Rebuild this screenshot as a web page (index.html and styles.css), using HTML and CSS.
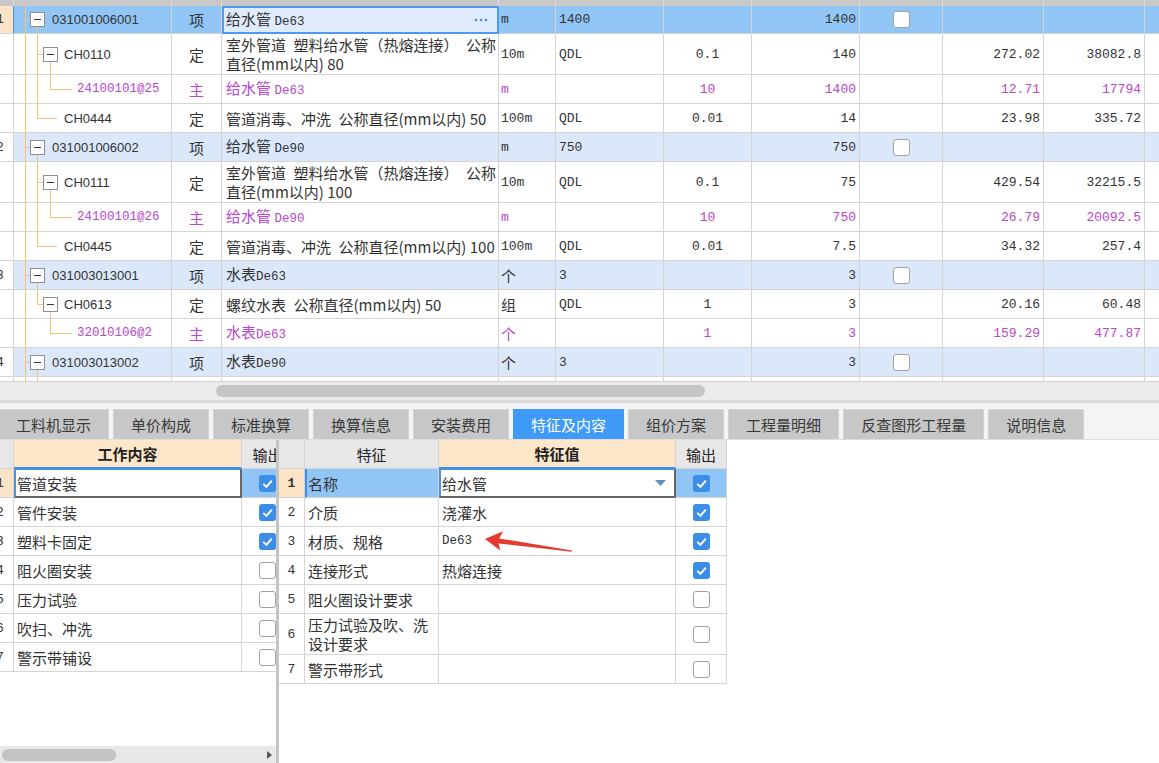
FILE: index.html
```html
<!DOCTYPE html>
<html lang="zh-CN">
<head>
<meta charset="utf-8">
<title>特征及内容</title>
<link rel="stylesheet" href="styles.css">
</head>
<body>
<div class="app">
  <div class="top">
    <div class="grid">
      <div class="row head"><div class="c"></div><div class="c"></div><div class="c"></div><div class="c"></div><div class="c"></div><div class="c"></div><div class="c"></div><div class="c"></div><div class="c"></div><div class="c"></div><div class="c"></div><div class="c"></div></div>

      <div class="row r28 sel">
        <div class="c n">1</div>
        <div class="c code tr-g"><span class="bx l0"></span><span class="cd">031001006001</span></div>
        <div class="c t">项</div>
        <div class="c nm edit"><span>给水管 <span class="mono">De63</span></span><svg class="dots" width="14" height="4" viewBox="0 0 14 4"><circle cx="2" cy="2" r="1.3" fill="#3d8fe8"/><circle cx="7" cy="2" r="1.3" fill="#3d8fe8"/><circle cx="12" cy="2" r="1.3" fill="#3d8fe8"/></svg></div>
        <div class="c u">m</div>
        <div class="c ex">1400</div>
        <div class="c k"></div>
        <div class="c q">1400</div>
        <div class="c cb"><span class="chk"></span></div>
        <div class="c p"></div>
        <div class="c p"></div>
        <div class="c"></div>
      </div>

      <div class="row tall">
        <div class="c n"></div>
        <div class="c code tr-b"><span class="bx l1"></span><span class="cd1">CH0110</span></div>
        <div class="c t">定</div>
        <div class="c nm"><span>室外管道&ensp;塑料给水管（热熔连接）&ensp;公称<br>直径(mm以内) 80</span></div>
        <div class="c u">10m</div>
        <div class="c ex">QDL</div>
        <div class="c k">0.1</div>
        <div class="c q">140</div>
        <div class="c cb"></div>
        <div class="c p">272.02</div>
        <div class="c p">38082.8</div>
        <div class="c"></div>
      </div>

      <div class="row zhu">
        <div class="c n"></div>
        <div class="c code tr-m"><span class="lm">24100101@25</span></div>
        <div class="c t">主</div>
        <div class="c nm"><span>给水管 <span class="mono">De63</span></span></div>
        <div class="c u">m</div>
        <div class="c ex"></div>
        <div class="c k">10</div>
        <div class="c q">1400</div>
        <div class="c cb"></div>
        <div class="c p">12.71</div>
        <div class="c p">17794</div>
        <div class="c"></div>
      </div>

      <div class="row">
        <div class="c n"></div>
        <div class="c code tr-ll"><span class="lf">CH0444</span></div>
        <div class="c t">定</div>
        <div class="c nm"><span>管道消毒、冲洗&ensp;公称直径(mm以内) 50</span></div>
        <div class="c u">100m</div>
        <div class="c ex">QDL</div>
        <div class="c k">0.01</div>
        <div class="c q">14</div>
        <div class="c cb"></div>
        <div class="c p">23.98</div>
        <div class="c p">335.72</div>
        <div class="c"></div>
      </div>

      <div class="row xiang">
        <div class="c n">2</div>
        <div class="c code tr-g"><span class="bx l0"></span><span class="cd">031001006002</span></div>
        <div class="c t">项</div>
        <div class="c nm"><span>给水管 <span class="mono">De90</span></span></div>
        <div class="c u">m</div>
        <div class="c ex">750</div>
        <div class="c k"></div>
        <div class="c q">750</div>
        <div class="c cb"><span class="chk"></span></div>
        <div class="c p"></div>
        <div class="c p"></div>
        <div class="c"></div>
      </div>

      <div class="row tall">
        <div class="c n"></div>
        <div class="c code tr-b"><span class="bx l1"></span><span class="cd1">CH0111</span></div>
        <div class="c t">定</div>
        <div class="c nm"><span>室外管道&ensp;塑料给水管（热熔连接）&ensp;公称<br>直径(mm以内) 100</span></div>
        <div class="c u">10m</div>
        <div class="c ex">QDL</div>
        <div class="c k">0.1</div>
        <div class="c q">75</div>
        <div class="c cb"></div>
        <div class="c p">429.54</div>
        <div class="c p">32215.5</div>
        <div class="c"></div>
      </div>

      <div class="row zhu">
        <div class="c n"></div>
        <div class="c code tr-m"><span class="lm">24100101@26</span></div>
        <div class="c t">主</div>
        <div class="c nm"><span>给水管 <span class="mono">De90</span></span></div>
        <div class="c u">m</div>
        <div class="c ex"></div>
        <div class="c k">10</div>
        <div class="c q">750</div>
        <div class="c cb"></div>
        <div class="c p">26.79</div>
        <div class="c p">20092.5</div>
        <div class="c"></div>
      </div>

      <div class="row">
        <div class="c n"></div>
        <div class="c code tr-ll"><span class="lf">CH0445</span></div>
        <div class="c t">定</div>
        <div class="c nm"><span>管道消毒、冲洗&ensp;公称直径(mm以内) 100</span></div>
        <div class="c u">100m</div>
        <div class="c ex">QDL</div>
        <div class="c k">0.01</div>
        <div class="c q">7.5</div>
        <div class="c cb"></div>
        <div class="c p">34.32</div>
        <div class="c p">257.4</div>
        <div class="c"></div>
      </div>

      <div class="row xiang">
        <div class="c n">3</div>
        <div class="c code tr-g"><span class="bx l0"></span><span class="cd">031003013001</span></div>
        <div class="c t">项</div>
        <div class="c nm"><span>水表<span class="mono">De63</span></span></div>
        <div class="c u"><span class="cj">个</span></div>
        <div class="c ex">3</div>
        <div class="c k"></div>
        <div class="c q">3</div>
        <div class="c cb"><span class="chk"></span></div>
        <div class="c p"></div>
        <div class="c p"></div>
        <div class="c"></div>
      </div>

      <div class="row">
        <div class="c n"></div>
        <div class="c code tr-bl"><span class="bx l1"></span><span class="cd1">CH0613</span></div>
        <div class="c t">定</div>
        <div class="c nm"><span>螺纹水表&ensp;公称直径(mm以内) 50</span></div>
        <div class="c u"><span class="cj">组</span></div>
        <div class="c ex">QDL</div>
        <div class="c k">1</div>
        <div class="c q">3</div>
        <div class="c cb"></div>
        <div class="c p">20.16</div>
        <div class="c p">60.48</div>
        <div class="c"></div>
      </div>

      <div class="row zhu">
        <div class="c n"></div>
        <div class="c code tr-ml"><span class="lm">32010106@2</span></div>
        <div class="c t">主</div>
        <div class="c nm"><span>水表<span class="mono">De63</span></span></div>
        <div class="c u"><span class="cj">个</span></div>
        <div class="c ex"></div>
        <div class="c k">1</div>
        <div class="c q">3</div>
        <div class="c cb"></div>
        <div class="c p">159.29</div>
        <div class="c p">477.87</div>
        <div class="c"></div>
      </div>

      <div class="row xiang">
        <div class="c n">4</div>
        <div class="c code tr-g"><span class="bx l0"></span><span class="cd">031003013002</span></div>
        <div class="c t">项</div>
        <div class="c nm"><span>水表<span class="mono">De90</span></span></div>
        <div class="c u"><span class="cj">个</span></div>
        <div class="c ex">3</div>
        <div class="c k"></div>
        <div class="c q">3</div>
        <div class="c cb"><span class="chk"></span></div>
        <div class="c p"></div>
        <div class="c p"></div>
        <div class="c"></div>
      </div>

      <div class="row part">
        <div class="c n"></div><div class="c code tr-v"></div><div class="c"></div><div class="c"></div><div class="c"></div><div class="c"></div><div class="c"></div><div class="c"></div><div class="c"></div><div class="c"></div><div class="c"></div><div class="c"></div>
      </div>
    </div>
    <div class="hs"><div class="hthumb"></div></div>
  </div>

  <div class="sep"></div>

  <div class="tabs">
    <div class="tab">工料机显示</div>
    <div class="tab">单价构成</div>
    <div class="tab">标准换算</div>
    <div class="tab">换算信息</div>
    <div class="tab">安装费用</div>
    <div class="tab on">特征及内容</div>
    <div class="tab">组价方案</div>
    <div class="tab">工程量明细</div>
    <div class="tab">反查图形工程量</div>
    <div class="tab">说明信息</div>
  </div>

  <div class="bottom">
    <div class="left">
      <div class="ltable">
        <div class="lrow hd"><div class="tc"></div><div class="tc pe">工作内容</div><div class="tc">输出</div></div>
        <div class="lrow lsel"><div class="tc ln">1</div><div class="tc edit2">管道安装</div><div class="tc lo"><svg class="ck" width="17" height="17" viewBox="0 0 17 17"><rect width="17" height="17" rx="3" fill="#3b8de8"/><path d="M4.3 8.9 L7.4 11.9 L12.8 5.6" fill="none" stroke="#fff" stroke-width="2"/></svg></div></div>
        <div class="lrow"><div class="tc ln">2</div><div class="tc lt">管件安装</div><div class="tc lo"><svg class="ck" width="17" height="17" viewBox="0 0 17 17"><rect width="17" height="17" rx="3" fill="#3b8de8"/><path d="M4.3 8.9 L7.4 11.9 L12.8 5.6" fill="none" stroke="#fff" stroke-width="2"/></svg></div></div>
        <div class="lrow"><div class="tc ln">3</div><div class="tc lt">塑料卡固定</div><div class="tc lo"><svg class="ck" width="17" height="17" viewBox="0 0 17 17"><rect width="17" height="17" rx="3" fill="#3b8de8"/><path d="M4.3 8.9 L7.4 11.9 L12.8 5.6" fill="none" stroke="#fff" stroke-width="2"/></svg></div></div>
        <div class="lrow"><div class="tc ln">4</div><div class="tc lt">阻火圈安装</div><div class="tc lo"><span class="chk"></span></div></div>
        <div class="lrow"><div class="tc ln">5</div><div class="tc lt">压力试验</div><div class="tc lo"><span class="chk"></span></div></div>
        <div class="lrow"><div class="tc ln">6</div><div class="tc lt">吹扫、冲洗</div><div class="tc lo"><span class="chk"></span></div></div>
        <div class="lrow"><div class="tc ln">7</div><div class="tc lt">警示带铺设</div><div class="tc lo"><span class="chk"></span></div></div>
      </div>
      <div class="lfill"></div>
      <div class="lscroll"><div class="lthumb"></div><div class="larrow"></div></div>
    </div>
    <div class="divider"></div>
    <div class="right">
      <div class="rrow hd"><div class="tc"></div><div class="tc">特征</div><div class="tc pe">特征值</div><div class="tc">输出</div></div>
      <div class="rrow rsel"><div class="tc rn">1</div><div class="tc fn">名称</div><div class="tc edit3"><span>给水管</span><svg class="dd" width="11" height="6" viewBox="0 0 11 6"><path d="M0 0 H11 L5.5 6 Z" fill="#5f8fbe"/></svg></div><div class="tc ro"><svg class="ck" width="17" height="17" viewBox="0 0 17 17"><rect width="17" height="17" rx="3" fill="#3b8de8"/><path d="M4.3 8.9 L7.4 11.9 L12.8 5.6" fill="none" stroke="#fff" stroke-width="2"/></svg></div></div>
      <div class="rrow"><div class="tc rn">2</div><div class="tc fn">介质</div><div class="tc fv">浇灌水</div><div class="tc ro"><svg class="ck" width="17" height="17" viewBox="0 0 17 17"><rect width="17" height="17" rx="3" fill="#3b8de8"/><path d="M4.3 8.9 L7.4 11.9 L12.8 5.6" fill="none" stroke="#fff" stroke-width="2"/></svg></div></div>
      <div class="rrow"><div class="tc rn">3</div><div class="tc fn">材质、规格</div><div class="tc fv"><span class="mono">De63</span></div><div class="tc ro"><svg class="ck" width="17" height="17" viewBox="0 0 17 17"><rect width="17" height="17" rx="3" fill="#3b8de8"/><path d="M4.3 8.9 L7.4 11.9 L12.8 5.6" fill="none" stroke="#fff" stroke-width="2"/></svg></div></div>
      <div class="rrow"><div class="tc rn">4</div><div class="tc fn">连接形式</div><div class="tc fv">热熔连接</div><div class="tc ro"><svg class="ck" width="17" height="17" viewBox="0 0 17 17"><rect width="17" height="17" rx="3" fill="#3b8de8"/><path d="M4.3 8.9 L7.4 11.9 L12.8 5.6" fill="none" stroke="#fff" stroke-width="2"/></svg></div></div>
      <div class="rrow"><div class="tc rn">5</div><div class="tc fn">阻火圈设计要求</div><div class="tc fv"></div><div class="tc ro"><span class="chk"></span></div></div>
      <div class="rrow tall"><div class="tc rn">6</div><div class="tc fn"><span>压力试验及吹、洗<br>设计要求</span></div><div class="tc fv"></div><div class="tc ro"><span class="chk"></span></div></div>
      <div class="rrow"><div class="tc rn">7</div><div class="tc fn">警示带形式</div><div class="tc fv"></div><div class="tc ro"><span class="chk"></span></div></div>
    </div>
  </div>
</div>

<svg class="annot" width="1159" height="763" viewBox="0 0 1159 763">
  <polygon points="485,539 503,531.3 499.2,538.4 572,550.4 571.7,551.7 498.6,543.4 500.3,550.6" fill="#e53a2f"/>
</svg>
</body>
</html>
```

FILE: styles.css
```css
* { box-sizing: border-box; }
html, body { margin: 0; padding: 0; }
body {
  width: 1159px;
  height: 763px;
  overflow: hidden;
  background: #fff;
  position: relative;
  font-family: "Noto Sans CJK SC", "Noto Sans", sans-serif;
  font-size: 15px;
  color: #333;
}
.app { display: flex; flex-direction: column; height: 763px; }

/* ---------- top grid ---------- */
.top { height: 400px; flex: none; display: flex; flex-direction: column; overflow: hidden; }
.grid { margin-left: -13px; flex: none; }
.row {
  display: grid;
  grid-template-columns: 27px 158px 50px 277px 57px 108px 88px 108px 83px 101px 101px 30px;
  height: 29px;
}
.row.r28 { height: 28px; }
.row.tall { height: 41px; }
.row.head { height: 6px; background: #c8c8c8; }
.row.part { height: 5px; }
.c {
  border-right: 1px solid #d4d4d4;
  border-bottom: 1px solid #d4d4d4;
  display: flex;
  align-items: center;
  overflow: hidden;
  white-space: nowrap;
  padding: 0 3px;
  line-height: 19px;
}
.head .c { border-bottom: none; border-right-color: #dadada; }
.xiang { background: #dbe8fa; }
.sel { background: #91c5f5; }
.zhu { color: #b847c9; }

.mono { font-family: "Liberation Mono", monospace; font-size: 12.5px; }
.n { justify-content: center; background: #fff; padding: 0; font-family: "Liberation Mono", monospace; font-size: 13px; }
.sel .n { background: #fde3c5; border-right-color: #4a8fe0; }
.code { padding: 0; font-family: "Liberation Sans", sans-serif; font-size: 13px; background-repeat: no-repeat; --L: linear-gradient(#f5c27c, #f5c27c); }
.t { justify-content: center; padding: 0; }
.nm { padding-left: 4px; }
.edit { border: 2px solid #4c9bf0; background: #dfeafb; padding-left: 2px; }
.dots { margin-left: auto; margin-right: 6px; flex: none; }
.u { padding-left: 2px; font-family: "Liberation Mono", monospace; font-size: 13px; }
.cj { font-family: "Noto Sans CJK SC", sans-serif; font-size: 15px; }
.ex { padding-left: 3px; font-family: "Liberation Mono", monospace; font-size: 13px; }
.k { justify-content: center; font-family: "Liberation Mono", monospace; font-size: 13px; }
.q, .p { justify-content: flex-end; padding-right: 3px; font-family: "Liberation Mono", monospace; font-size: 13px; }
.cb { justify-content: center; }

.chk {
  display: block;
  width: 17px;
  height: 17px;
  flex: none;
  border: 1px solid #a2a2a2;
  border-radius: 3px;
  background: #fff;
}
.ck { display: block; flex: none; }

/* tree boxes and text */
.bx {
  width: 15px;
  height: 15px;
  flex: none;
  border: 1px solid #8e8e8e;
  background: #fff;
  display: flex;
  align-items: center;
  justify-content: center;
}
.bx::after { content: ""; width: 7px; height: 1px; background: #333; }
.bx.l0 { margin-left: 16px; }
.bx.l1 { margin-left: 29px; }
.cd { margin-left: 7px; }
.cd1 { margin-left: 6px; }
.lf { margin-left: 50px; }
.lm { margin-left: 63px; font-family: "Liberation Mono", monospace; font-size: 12.5px; }

/* tree connector lines (orange) */
.tr-g {
  background-image: var(--L), var(--L), var(--L);
  background-size: 1px 100%, 5px 1px, 1px 50%;
  background-position: 11px 0, 11px 50%, 23px 100%;
}
.tr-b {
  background-image: var(--L), var(--L), var(--L), var(--L);
  background-size: 1px 100%, 1px 100%, 6px 1px, 1px 50%;
  background-position: 11px 0, 23px 0, 23px 50%, 36px 100%;
}
.tr-bl {
  background-image: var(--L), var(--L), var(--L), var(--L);
  background-size: 1px 100%, 1px 50%, 6px 1px, 1px 50%;
  background-position: 11px 0, 23px 0, 23px 50%, 36px 100%;
}
.tr-m {
  background-image: var(--L), var(--L), var(--L), var(--L);
  background-size: 1px 100%, 1px 100%, 1px 50%, 22px 1px;
  background-position: 11px 0, 23px 0, 36px 0, 36px 50%;
}
.tr-ml {
  background-image: var(--L), var(--L), var(--L);
  background-size: 1px 100%, 1px 50%, 22px 1px;
  background-position: 11px 0, 36px 0, 36px 50%;
}
.tr-ll {
  background-image: var(--L), var(--L), var(--L);
  background-size: 1px 100%, 1px 50%, 20px 1px;
  background-position: 11px 0, 23px 0, 23px 50%;
}
.tr-v {
  background-image: var(--L), var(--L);
  background-size: 1px 100%, 1px 100%;
  background-position: 11px 0, 23px 0;
}

.hs { height: 18px; flex: none; margin-top: auto; background: #ececec; display: flex; align-items: center; }
.hthumb { margin-left: 216px; width: 489px; height: 12px; border-radius: 6px; background: #c6c6c6; }

/* ---------- tabs ---------- */
.sep { height: 3px; flex: none; background: #d9d9d9; }
.tabs {
  height: 37px;
  flex: none;
  background: #f4f4f4;
  border-bottom: 1px solid #dedede;
  display: flex;
  align-items: flex-start;
  gap: 4px;
  padding-top: 6px;
}
.tab {
  height: 30px;
  padding: 0 17px;
  background: #c7c7c7;
  color: #3a3a3a;
  border: 1px solid #d3d3d3;
  border-bottom: none;
  display: flex;
  align-items: center;
  white-space: nowrap;
  font-size: 15px;
}
.tab:first-child { margin-left: -2px; }
.tab.on { background: #3f9bf7; border-color: #3f9bf7; color: #fff; }

/* ---------- bottom panels ---------- */
.bottom { flex: 1; min-height: 0; display: flex; }
.left { width: 276px; flex: none; display: flex; flex-direction: column; overflow: hidden; }
.divider { width: 3px; flex: none; background: #c4c4c4; }
.right { flex: 1; overflow: hidden; }

.ltable { margin-left: -13px; }
.lrow { display: grid; grid-template-columns: 27px 228px 52px; height: 29px; }
.rrow { display: grid; grid-template-columns: 26px 134px 237px 51px; height: 29px; width: 448px; }
.rrow.tall { height: 41px; }

.tc {
  border-right: 1px solid #d4d4d4;
  border-bottom: 1px solid #d4d4d4;
  display: flex;
  align-items: center;
  padding: 0 3px;
  white-space: nowrap;
  overflow: hidden;
  line-height: 19px;
}
.hd .tc { background: #e7e7e7; justify-content: center; color: #222; padding: 0; }
.hd .tc.pe { background: #fde6c9; font-weight: bold; border-bottom: 2px solid #3d8fe8; }

.ln { justify-content: center; padding: 0; font-family: "Liberation Mono", monospace; font-size: 13px; }
.lt { padding-left: 3px; }
.lo { justify-content: center; padding: 0; }
.lsel .ln { background: #fde3c5; }
.lsel .lo { background: #91c5f5; }
.edit2, .edit3 {
  background: #fff;
  border-top: 1px solid #4d94e0;
  border-left: 2px solid #4d94e0;
  border-right: 2px solid #666;
  border-bottom: 2px solid #666;
  padding-left: 1px;
}
.dd { margin-left: auto; margin-right: 5px; flex: none; }

.rn { justify-content: center; padding: 0; font-family: "Liberation Mono", monospace; font-size: 13px; }
.fn { padding-left: 3px; }
.fv { padding-left: 3px; }
.ro { justify-content: center; padding: 0; }
.rsel .rn { background: #fde3c5; font-weight: bold; }
.rsel .fn { background: #91c5f5; border-left: 2px solid #3d8fe8; padding-left: 1px; }
.rsel .ro { background: #91c5f5; }

.lfill { flex: 1; }
.lscroll { height: 17px; flex: none; background: #e8e8e8; display: flex; align-items: center; padding: 0 4px 0 2px; }
.lthumb { width: 114px; height: 12px; border-radius: 6px; background: #c3c3c3; }
.larrow { margin-left: auto; width: 0; height: 0; border-left: 5px solid #555; border-top: 4px solid transparent; border-bottom: 4px solid transparent; }

/* annotation arrow overlay */
.annot { position: absolute; left: 0; top: 0; pointer-events: none; }
```
